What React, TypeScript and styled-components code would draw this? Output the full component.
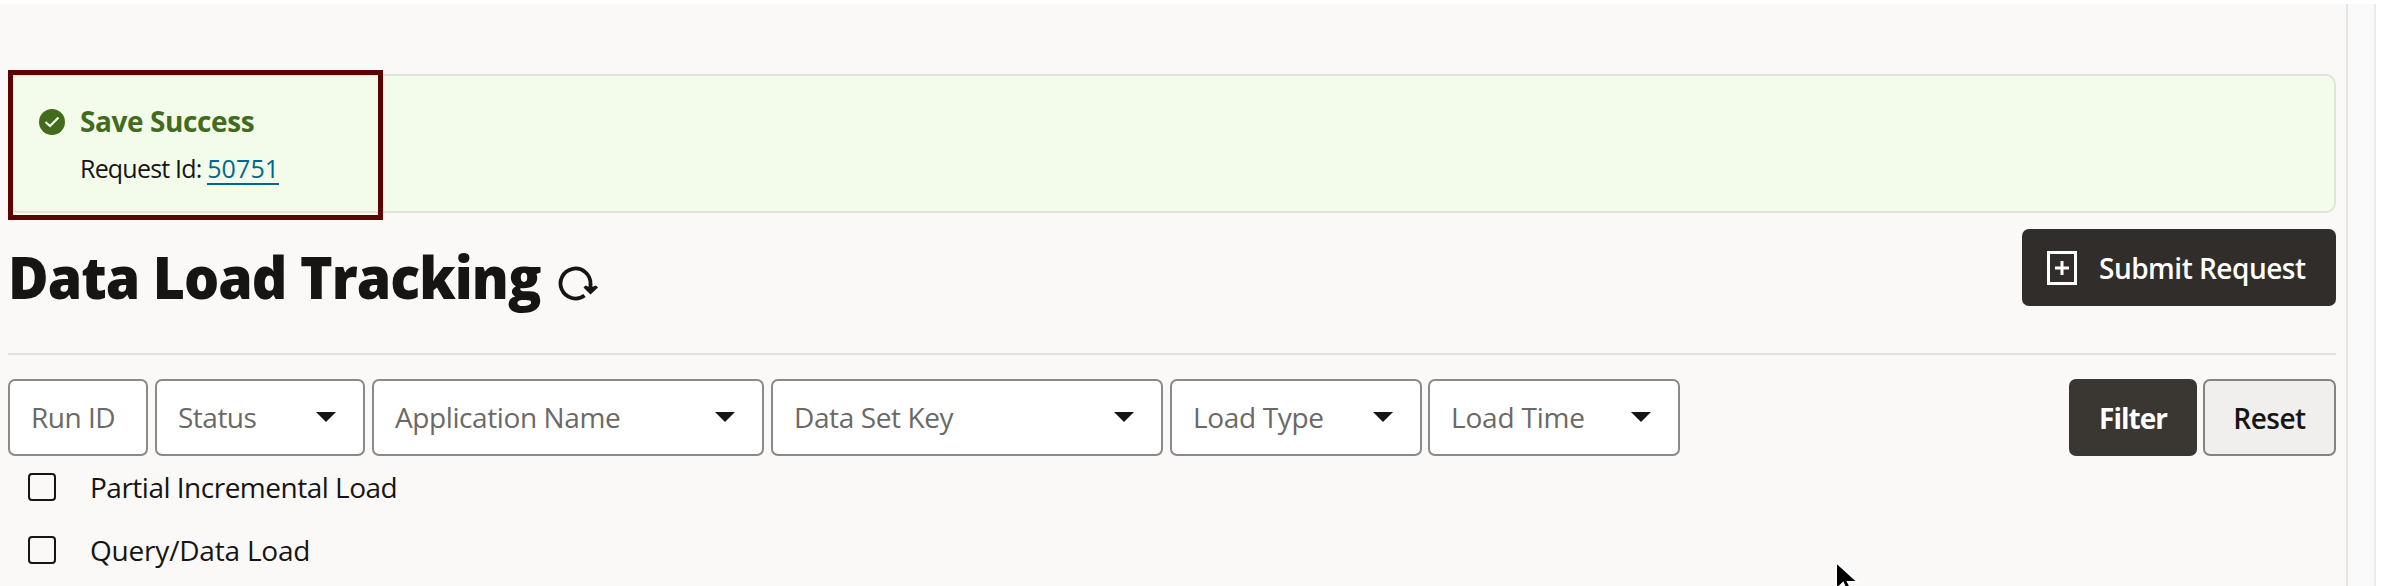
import React from "react";
import styled, { createGlobalStyle } from "styled-components";

const GlobalStyle = createGlobalStyle`
  * { box-sizing: border-box; }
  body { margin: 0; background: #fff; }
  body, button, input { font-family: "Open Sans", "Noto Sans", sans-serif; }
`;

const Page = styled.div`
  display: flex;
  width: 2401px;
  height: 586px;
  padding-top: 4px;
  overflow: hidden;
  position: relative;
  color: #161513;
`;

const Main = styled.main`
  width: 2346px;
  height: 582px;
  padding: 66px 10px 0 8px;
  background: #fbf9f8;
`;

const Gutter = styled.aside`
  width: 30px;
  height: 582px;
  background: #fafafa;
  border-left: 2px solid #e6e6e6;
  border-right: 2px solid #ececec;
`;

const Banner = styled.section`
  height: 139px;
  margin-top: 4px;
  background: #f3fceb;
  border: 2px solid #dfe4d6;
  border-radius: 10px;
`;

const Highlight = styled.div`
  display: flex;
  gap: 15px;
  width: 375px;
  height: 150px;
  margin: -6px 0 0 -2px;
  padding: 34px 0 0 26px;
  border: 5px solid #5c0500;
`;

const Message = styled.div`
  display: flex;
  flex-direction: column;
  margin-top: -2px;
`;

const Text = styled.span<{ $track?: number }>`
  letter-spacing: ${(p) => p.$track ?? 0}px;
  white-space: nowrap;
`;

const MessageTitle = styled(Text)`
  font-size: 28px;
  font-weight: 700;
  line-height: 28px;
  color: #436b1d;
`;

const MessageBody = styled(Text)`
  margin-top: 19px;
  font-size: 25px;
  line-height: 28px;
`;

const Link = styled.a`
  display: inline-block;
  height: 31px;
  color: #00688c;
  border-bottom: 2px solid #00688c;
  letter-spacing: 0.1px;
  text-decoration: none;
`;

const Header = styled.header`
  display: flex;
  justify-content: space-between;
  align-items: flex-start;
  height: 142px;
  padding-top: 16px;
  border-bottom: 2px solid #e2e1e0;
`;

const Heading = styled.div`
  display: flex;
  align-items: flex-start;
`;

const Title = styled.h1`
  margin: 12px 0 0;
  width: 550px;
  font-size: 59px;
  font-weight: 800;
  line-height: 70px;
  white-space: nowrap;
  letter-spacing: -1px;
  transform: scaleX(0.938);
  transform-origin: left center;
`;

const RefreshIcon = styled.svg`
  margin-top: 36px;
`;

const Button = styled.button<{ $width: number; $tone: "ink" | "dark" | "light" }>`
  display: flex;
  align-items: center;
  justify-content: ${(p) => (p.$tone === "ink" ? "flex-start" : "center")};
  width: ${(p) => p.$width}px;
  height: 77px;
  padding: 0 0 0 ${(p) => (p.$tone === "ink" ? 25 : 0)}px;
  border-radius: 7px;
  border: ${(p) => (p.$tone === "light" ? "2px solid #858381" : "0")};
  background: ${(p) => ({ ink: "#312d2a", dark: "#3a3631", light: "#f1efed" })[p.$tone]};
  color: ${(p) => (p.$tone === "light" ? "#161513" : "#fff")};
  font-size: 28px;
  font-weight: ${(p) => (p.$tone === "dark" ? 700 : 600)};
  line-height: 38px;
`;

const AddIcon = styled.svg`
  margin-right: 22px;
`;

const Toolbar = styled.div`
  display: flex;
  justify-content: space-between;
  margin-top: 24px;
`;

const Fields = styled.div`
  display: flex;
  gap: 7px;
`;

const Actions = styled.div`
  display: flex;
  gap: 6px;
`;

const Field = styled.div<{ $width: number }>`
  display: flex;
  align-items: center;
  justify-content: space-between;
  width: ${(p) => p.$width}px;
  height: 77px;
  padding: 0 27px 2px 21px;
  background: #fff;
  border: 2px solid #8b8a88;
  border-radius: 7px;
  font-size: 28px;
  color: #6b6966;

  &:last-child {
    margin-left: -1px;
  }
`;

const Options = styled.div`
  display: flex;
  flex-direction: column;
  gap: 25px;
  padding: 12px 0 0 20px;
`;

const Option = styled.label`
  display: flex;
  align-items: center;
  gap: 34px;
  height: 38px;
  font-size: 28px;
`;

const Box = styled.span`
  width: 28px;
  height: 28px;
  border: 2px solid #161513;
  border-radius: 4px;
`;

const Pointer = styled.svg`
  position: absolute;
  left: 1833px;
  top: 560px;
`;

const fields = [
  { label: "Run ID", width: 140, track: -0.5, select: false },
  { label: "Status", width: 210, track: -0.5, select: true },
  { label: "Application Name", width: 392, track: -0.4, select: true },
  { label: "Data Set Key", width: 392, track: -0.4, select: true },
  { label: "Load Type", width: 252, track: -0.35, select: true },
  { label: "Load Time", width: 252, track: -0.2, select: true },
];

export default function App() {
  return (
    <Page>
      <GlobalStyle />
      <Main>
        <Banner>
          <Highlight>
            <svg width="26" height="26" viewBox="0 0 26 26">
              <circle cx="13" cy="13" r="13" fill="#436b1d" />
              <path d="M6.5 13 11 17 19.500 8.500" fill="none" stroke="#f3fceb" strokeWidth="2.2" />
            </svg>
            <Message>
              <MessageTitle $track={-0.4}>Save Success</MessageTitle>
              <MessageBody $track={-0.8}>
                Request Id: <Link>50751</Link>
              </MessageBody>
            </Message>
          </Highlight>
        </Banner>
        <Header>
          <Heading>
            <Title>Data Load Tracking</Title>
            <RefreshIcon width="42" height="38" viewBox="0 0 42 38">
              <path d="M26.500 30.500A15 15 0 1 1 32.500 19V24" fill="none" stroke="#161513" strokeWidth="3.8" />
              <path d="M25.500 22.500 27.500 20.500 32.500 22.500 38 20.500 40 22.500 32.500 29.500Z" fill="#161513" />
            </RefreshIcon>
          </Heading>
          <Button $width={314} $tone="ink">
            <AddIcon width="30" height="34" viewBox="0 0 30 34">
              <path d="M1.500 1.500H28.500V32.500H1.500ZM15 10V24M8 17H22" fill="none" stroke="#fff" strokeWidth="3" />
            </AddIcon>
            <Text $track={-0.5}>Submit Request</Text>
          </Button>
        </Header>
        <Toolbar>
          <Fields>
            {fields.map((f) => (
              <Field key={f.label} $width={f.width}>
                <Text $track={f.track}>{f.label}</Text>
                {f.select && (
                  <svg width="20" height="10" viewBox="0 0 20 10">
                    <path d="M0 0H20L10 10Z" fill="#161513" />
                  </svg>
                )}
              </Field>
            ))}
          </Fields>
          <Actions>
            <Button $width={128} $tone="dark"><Text $track={-1}>Filter</Text></Button>
            <Button $width={133} $tone="light"><Text $track={-0.5}>Reset</Text></Button>
          </Actions>
        </Toolbar>
        <Options>
          <Option><Box /><Text $track={-0.5}>Partial Incremental Load</Text></Option>
          <Option><Box /><Text $track={-0.2}>Query/Data Load</Text></Option>
        </Options>
      </Main>
      <Gutter />
      <Pointer width="30" height="40" viewBox="0 0 30 40">
        <path d="M3 2V30L10 23L15 34L20 32L15 22H25Z" fill="#000" stroke="#fff" strokeWidth="2" />
      </Pointer>
    </Page>
  );
}
